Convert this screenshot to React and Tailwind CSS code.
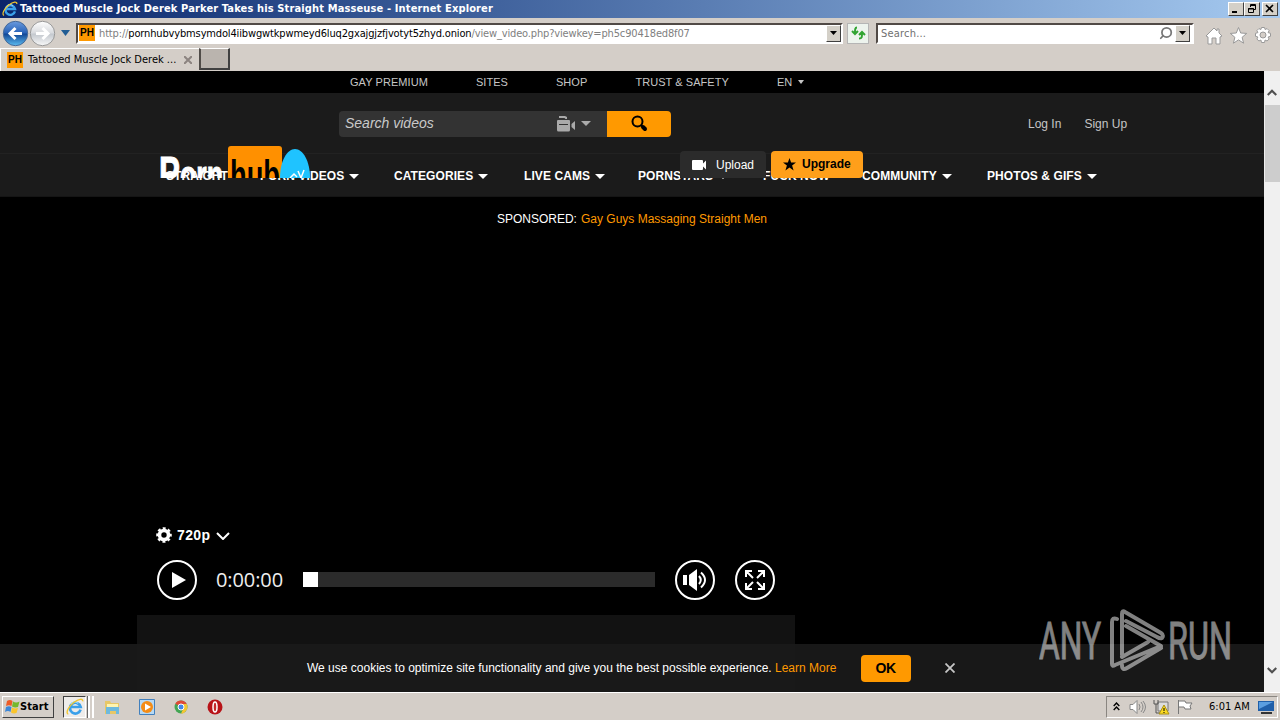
import React from 'react';
import { Search } from 'lucide-react';

const topLinks = ['GAY PREMIUM', 'SITES', 'SHOP', 'TRUST & SAFETY'];

const menu = [
  { label: 'STRAIGHT', width: 'w-[94px]' },
  { label: 'PORN VIDEOS', width: 'w-[134px]', arrow: true },
  { label: 'CATEGORIES', width: 'w-[130px]', arrow: true },
  { label: 'LIVE CAMS', width: 'w-[114px]', arrow: true },
  { label: 'PORNSTARS', width: 'w-[125px]', arrow: true },
  { label: 'FUCK NOW', width: 'w-[99px]' },
  { label: 'COMMUNITY', width: 'w-[125px]', arrow: true },
  { label: 'PHOTOS & GIFS', width: 'w-[120px]', arrow: true },
];

const Caret = ({ className }) => (
  <svg className={className} viewBox="0 0 10 5" fill="currentColor" preserveAspectRatio="none">
    <path d="M0 0h10L5 5z" />
  </svg>
);

const IeIcon = ({ size }) => (
  <svg width={size} height={size} viewBox="0 0 20 20" fill="none" className="shrink-0">
    <path d="M16.2 13A6 6 0 1 1 16.3 10H5" stroke="#3aa0ea" strokeWidth="3" />
    <path d="M5.5 7a5 5 0 0 1 8-1" stroke="#a5e4ff" strokeWidth="1.2" />
    <path d="M2.6 18C-1 17 3 9 8.5 5S19 0 18.6 3.8" stroke="#f2c62f" strokeWidth="1.5" />
  </svg>
);

const Favicon = () => (
  <span className="flex h-4 w-4 shrink-0 items-center justify-center bg-[#ff9900] font-['Liberation_Sans'] text-[10px] font-bold leading-none text-black">
    PH
  </span>
);

const DropButton = () => (
  <span className="flex h-[17px] w-[15px] items-center justify-center border border-t-white border-l-white border-r-[#404040] border-b-[#404040] bg-[#d4d0c8]">
    <Caret className="h-1 w-[7px] text-black" />
  </span>
);

const WindowButton = ({ children, className = '' }) => (
  <span className={`flex h-[14px] w-4 items-center justify-center border border-t-white border-l-white border-r-[#404040] border-b-[#404040] bg-[#d4d0c8] ${className}`}>
    <svg width="10" height="10" viewBox="0 0 10 10" fill="none" stroke="#000">
      {children}
    </svg>
  </span>
);

const NavCircle = ({ back }) => (
  <svg width="27" height="27" viewBox="0 0 27 27" className="shrink-0">
    <defs>
      <linearGradient id={back ? 'nav-back' : 'nav-next'} x2="0" y2="1">
        <stop stopColor={back ? '#6a9ade' : '#ffffff'} />
        <stop offset=".48" stopColor={back ? '#2862b7' : '#d8dade'} />
        <stop offset=".52" stopColor={back ? '#124795' : '#c3c8ce'} />
        <stop offset="1" stopColor={back ? '#5cbcf1' : '#f8f8f8'} />
      </linearGradient>
    </defs>
    <circle cx="13.5" cy="13.5" r="12.2" fill={back ? 'url(#nav-back)' : 'url(#nav-next)'} stroke={back ? '#466998' : '#989898'} />
    <path
      d={back ? 'M20 13.5H8m5.5-5.5L8 13.5l5.5 5.5' : 'M7 13.5h12M13.5 8l5.5 5.5-5.5 5.5'}
      fill="none"
      stroke="#fff"
      strokeWidth="3"
    />
  </svg>
);

const Browser = () => (
  <div className="font-['DejaVu_Sans_Condensed','DejaVu_Sans',sans-serif] text-[11px] text-black">
    {/* title bar */}
    <div className="flex h-[18px] items-center bg-linear-to-r from-[#0a246a] to-[#a6caf0] pr-0.5 pl-0.5">
      <IeIcon size={16} />
      <span className="ml-0.5 pt-px text-[11px] font-bold whitespace-nowrap text-white tracking-[0.135px]">
        Tattooed Muscle Jock Derek Parker Takes his Straight Masseuse - Internet Explorer
      </span>
      <div className="ml-auto flex">
        <WindowButton><path d="M1 8h5" strokeWidth="2" /></WindowButton>
        <WindowButton><path d="M3.5 3V.5h5v5H6M3 1.5h6M1.5 4.5h5v4h-5zM1 5h6" /></WindowButton>
        <WindowButton className="ml-0.5"><path d="M1 1l7 7M8 1L1 8" strokeWidth="1.6" /></WindowButton>
      </div>
    </div>

    {/* address bar */}
    <div className="flex h-[30px] items-center bg-[#d4cec8] pl-[2px]">
      <NavCircle back />
      <NavCircle />
      <Caret className="mx-[5px] h-[6px] w-[9px] text-[#215d94]" />
      <div className="ml-px flex h-[21px] w-[767px] items-center border-2 border-t-[#514a46] border-l-[#514a46] border-r-white border-b-white bg-white pl-px">
        <Favicon />
        <span className="ml-1 pt-0.5 whitespace-nowrap text-[#808080] tracking-[-0.148px]">
          http://<span className="text-black">pornhubvybmsymdol4iibwgwtkpwmeyd6luq2gxajgjzfjvotyt5zhyd.onion</span>/view_video.php?viewkey=ph5c90418ed8f07
        </span>
        <span className="ml-auto"><DropButton /></span>
      </div>
      <span className="ml-1 flex h-[21px] w-[22px] items-center justify-center border border-[#b5b5b5] bg-[#edf3ed]">
        <svg width="15" height="14" viewBox="0 0 15 14" fill="none" stroke="#31a431" strokeWidth="2">
          <path d="M6 1.500C4 1.500 4 3 4 8M1 5l3 3 3-3M8 12.500c3 0 3-1 3-6M8 9l3-3 3 3" />
        </svg>
      </span>
      <div className="ml-[7px] flex h-[21px] w-[318px] items-center border-2 border-t-[#514a46] border-l-[#514a46] border-r-white border-b-white bg-white pl-[3px]">
        <span className="pt-0.5 text-[#707070] tracking-[0.2px]">Search...</span>
        <Search className="mr-0.5 ml-auto h-[14px] w-[14px] -scale-x-100 text-[#777]" strokeWidth={3} />
        <span className="mr-0.5"><DropButton /></span>
      </div>
      <svg width="70" height="20" viewBox="0 0 70 20" className="mt-[5px] ml-[11px]" fill="#fff" stroke="#999">
        <path d="M1 10L9 2l3 3V3h2v4l3 3-2 1v7h-4v-6H7v6H3v-7z" />
        <path d="M33.500 1.500l2.200 5.500 6 .4-4.600 3.900 1.500 5.900-5.100-3.300-5.100 3.300 1.500-5.900-4.600-3.900 6-.4z" />
        <g>
          <path d="M56.500 1.500h3l.6 2 2-.9 2 2-1 2 2.400.7v3l-2.400.7 1 2-2 2-2-1-.6 2.500h-3l-.6-2.500-2 1-2-2 1-2-2.400-.7v-3l2.400-.7-1-2 2-2 2 .9z" />
          <circle cx="58" cy="9" r="3" fill="#d4cec8" />
        </g>
      </svg>
    </div>

    {/* tabs */}
    <div className="flex h-[23px] bg-[#d4cec8]">
      <div className="flex w-[199px] items-center border-t border-l border-white pl-[6px]">
        <Favicon />
        <span className="ml-[5px] w-[150px] pt-px whitespace-nowrap">Tattooed Muscle Jock Derek ...</span>
        <svg width="8" height="8" viewBox="0 0 8 8" className="ml-[6px]" stroke="#8c8480" strokeWidth="2">
          <path d="M0 0l8 8M8 0L0 8" />
        </svg>
      </div>
      <span className="h-[22px] w-[31px] border-t border-r-2 border-b-2 border-l-2 border-t-white border-r-[#404040] border-b-[#404040] border-l-[#504c48] bg-[#bab4ae]" />
    </div>
  </div>
);

const Header = () => (
  <header className="relative">
    <div className="flex h-[22px] items-center gap-[48px] bg-black pl-[350px] text-[11px] tracking-[0.06px] text-[#c6c6c6]">
      {topLinks.map((link) => (
        <span key={link}>{link}</span>
      ))}
      <span className="flex items-center gap-[6px]">EN <Caret className="h-1 w-[6px]" /></span>
    </div>

    <div className="flex h-[61px] items-center border-b border-[#222] bg-[#1b1b1b] pt-px pl-[339px] text-[12px]">
      <div className="flex h-[26px] w-[268px] items-center rounded-l-sm bg-[#333] pl-[6px] text-[#cacaca]">
        <span className="text-[14px] italic">Search videos</span>
        <svg width="20" height="16" viewBox="0 0 20 16" className="ml-auto text-[#aaa]" fill="currentColor">
          <path d="M3 0h6l2 1v2H9.500L8.500 2H3zM2 4h11q1 0 1 1v9q0 1.500-1.500 1.500h-10Q1 15.500 1 14V5q0-1 1-1zM15.500 8L19 5v9l-3.500-3z" />
          <path d="M3 8.500h9" stroke="#333" />
        </svg>
        <Caret className="mr-4 ml-[5px] h-[5px] w-[10px] text-[#aaa]" />
      </div>
      <div className="flex h-[26px] w-16 items-center justify-center rounded-r-sm bg-[#ff9900] text-black">
        <svg width="17" height="17" viewBox="0 0 17 17" fill="none" stroke="currentColor">
          <circle cx="6.500" cy="6.500" r="5" strokeWidth="2" />
          <path d="M10 10l2 2" strokeWidth="2" />
          <path d="M12 12l2 2" strokeWidth="4" strokeLinecap="round" />
        </svg>
      </div>
      <span className="ml-[357px] text-[#c6c6c6]">Log In</span>
      <span className="ml-[23px] text-[#c6c6c6]">Sign Up</span>
    </div>

    <nav className="flex h-[43px] items-center border-b border-[#151515] bg-[#1b1b1b] pt-0.5 pl-[166px] text-[12px] font-bold text-white">
      {menu.map((item) => (
        <span key={item.label} className={`flex shrink-0 items-center gap-[5px] whitespace-nowrap tracking-[0.08px] ${item.width}`}>
          {item.label}
          {item.arrow && <Caret className="mt-px h-[5px] w-[10px]" />}
        </span>
      ))}
    </nav>

    {/* logo, cut off by its container */}
    <svg className="absolute top-[75px] left-[160px]" width="151" height="32" viewBox="0 0 151 32">
      <g fill="#fff" stroke="#fff" fontFamily="Liberation Sans" fontWeight="bold">
        <text x="-1" y="43" fontSize="47" textLength="64" lengthAdjust="spacingAndGlyphs">
          P<tspan fontSize="40">orn</tspan>
        </text>
      </g>
      <rect x="68" width="54" height="38" rx="3" fill="#ff9000" />
      <text x="70" y="44" fill="#000" fontFamily="Liberation Sans" fontWeight="bold" fontSize="42" textLength="50" lengthAdjust="spacingAndGlyphs">hub</text>
      <path d="M120 32C120 15 127 3 135 3s15 12 15 29z" fill="#1fc3ff" />
      <path d="M130 32l4-4 3 3M138 25l3 7 3-8" stroke="#fff" strokeWidth="1.500" fill="none" />
    </svg>

    <div className="absolute top-[80px] left-[680px] flex h-[27px] gap-[5px] text-[12px]">
      <div className="flex w-[86px] items-center rounded-t bg-[#2b2b2b] pl-3 text-white">
        <svg width="15" height="10" viewBox="0 0 15 10" fill="currentColor">
          <path d="M0 1Q0 0 1 0h9q1 0 1 1v2.500L14 .5v9l-3-3V9q0 1-1 1H1Q0 10 0 9z" />
        </svg>
        <span className="ml-[9px]">Upload</span>
      </div>
      <div className="flex w-[92px] items-center rounded bg-[#ff9f1a] pb-px pl-3 font-bold text-black">
        <svg width="13" height="13" viewBox="0 0 13 13">
          <path d="M6.500 0l1.600 4.500H13L9.100 7.400l1.500 5.200-4.100-3.100-4.100 3.100 1.500-5.200L0 4.500h4.900z" />
        </svg>
        <span className="ml-[6px]">Upgrade</span>
      </div>
    </div>
  </header>
);

const Player = () => (
  <div className="mt-[296px] text-white">
    <div className="flex h-[20px] items-center pl-[156px] text-[14px] font-bold">
      <svg width="16" height="16" viewBox="0 0 16 16" fill="none" stroke="currentColor">
        <circle cx="8" cy="8" r="4.500" strokeWidth="3.600" />
        <circle cx="8" cy="8" r="6.600" strokeWidth="2.400" strokeDasharray="2.900 2.284" strokeDashoffset="1.450" />
      </svg>
      <span className="ml-[5px] tracking-[0.4px]">720p</span>
      <svg width="14" height="8" viewBox="0 0 14 8" className="mt-px ml-[5px]" fill="none" stroke="currentColor" strokeWidth="2">
        <path d="M1 1l6 6 6-6" />
      </svg>
    </div>
    <div className="mt-[15px] flex h-10 items-center pl-[157px]">
      <svg width="40" height="40" viewBox="0 0 40 40" fill="none" stroke="currentColor">
        <circle cx="20" cy="20" r="19" strokeWidth="2" />
        <path d="M15 12l14 8-14 8z" fill="currentColor" stroke="none" />
      </svg>
      <span className="ml-[19px] w-[87px] font-['Open_Sans','Noto_Sans',sans-serif] text-[20px] tracking-[-0.1px] text-[#eee]">0:00:00</span>
      <div className="-mt-px h-[15px] w-[352px] bg-[#2b2b2b]">
        <div className="h-full w-[15px] bg-white" />
      </div>
      <svg width="40" height="40" viewBox="0 0 40 40" className="ml-5" fill="none" stroke="currentColor">
        <circle cx="20" cy="20" r="19" strokeWidth="2" />
        <path d="M8 15h4v10H8zM14 15l8-6v22l-8-6z" fill="currentColor" stroke="none" />
        <path d="M24 16q3.500 4 0 8M26 12.500q8 7.500 0 15" strokeWidth="2" />
      </svg>
      <svg width="40" height="40" viewBox="0 0 40 40" className="ml-5" fill="none" stroke="currentColor" strokeWidth="2">
        <circle cx="20" cy="20" r="19" />
        <path d="M11 17v-6h6M11 11l7 7M23 11h6v6M29 11l-7 7M11 23v6h6M11 29l7-7M23 29h6v-6M29 29l-7-7" />
      </svg>
    </div>
    <div className="mt-[15px] ml-[137px] h-[77px] w-[658px] bg-[#121212]" />
  </div>
);

const CookieBar = () => (
  <div className="absolute bottom-0 left-0 flex h-12 w-full items-center bg-[#1b1b1b]/90 pl-[307px] text-[12px] text-white">
    <span className="w-[468px] whitespace-nowrap">
      We use cookies to optimize site functionality and give you the best possible experience.
    </span>
    <span className="w-[86px] text-[#ff9900]">Learn More</span>
    <span className="flex h-[27px] w-[50px] items-center justify-center rounded bg-[#ff9900] text-[14px] font-bold text-black">
      <span className="-ml-px tracking-[-0.5px]">OK</span>
    </span>
    <svg width="10" height="10" viewBox="0 0 10 10" className="ml-[34px]" stroke="#c6c6c6" strokeWidth="1.800">
      <path d="M.5.5l9 9M9.500.5l-9 9" />
    </svg>
  </div>
);

const Watermark = () => (
  <svg className="absolute right-[29px] bottom-[20px]" width="196" height="64" viewBox="0 0 196 64" fill="#fff" opacity=".5">
    <g fontFamily="Roboto" fontSize="52" stroke="#fff" strokeWidth=".9">
      <text x="0" y="51" textLength="62" lengthAdjust="spacingAndGlyphs">ANY</text>
      <text x="129" y="51" textLength="64" lengthAdjust="spacingAndGlyphs">RUN</text>
    </g>
    <path
      d="M78 11q-5-2-5 3v42q0 3 3 1L122 38 87 18M83 47V6q0-4 3-2l36 21q3 2 1 5-2 1-5-1L87 13M109 34L83 49M83 57q0 6 5 3l34-20"
      fill="none"
      stroke="#fff"
      strokeWidth="4"
      strokeLinejoin="round"
      strokeLinecap="round"
    />
  </svg>
);

const Scrollbar = () => (
  <div className="flex w-4 flex-col items-center bg-[#f0f0f0] pt-[18px] pb-[18px]">
    <svg width="10" height="7" viewBox="0 0 10 7" fill="none" stroke="#505050" strokeWidth="2.200"><path d="M.7 6L5 1.700 9.300 6" /></svg>
    <div className="mt-[9px] h-[77px] w-[15px] bg-[#cdcdcd]" />
    <svg width="10" height="7" viewBox="0 0 10 7" className="mt-auto" fill="none" stroke="#505050" strokeWidth="2.200"><path d="M.7 1L5 5.300 9.300 1" /></svg>
  </div>
);

const Taskbar = () => (
  <div className="flex h-7 items-center border-t border-white bg-[#d4cec8] pl-0.5 font-['DejaVu_Sans_Condensed','DejaVu_Sans',sans-serif] text-[11px] text-black">
    <div className="flex h-[22px] w-[52px] items-center border border-t-white border-l-white border-r-[#404040] border-b-[#404040] pl-0.5">
      <svg width="15" height="15" viewBox="0 0 15 15">
        <path d="M2 2q3-2 5.500 0L6.500 7Q4 5.500 1 7z" fill="#ed5b27" />
        <path d="M8 2.500q3 2 6.500 0L13 8q-3 1-6-.5z" fill="#75b82d" />
        <path d="M1 8q3-1.500 5.500 0L5.500 13Q3 11 0 13z" fill="#3b87d8" />
        <path d="M7 8.500q3 1.500 6 .5l-1.500 5q-3 1-5.500-.5z" fill="#fac52c" />
      </svg>
      <span className="pt-0.5 font-bold tracking-[0.1px]">Start</span>
    </div>
    <div className="ml-[9px] flex h-[22px] w-[23px] items-center justify-center border border-t-[#404040] border-l-[#404040] border-r-white border-b-white bg-[#eeecea]">
      <IeIcon size={18} />
    </div>
    <span className="ml-px h-[22px] w-[3px] border-r border-l border-l-[#666] border-r-white bg-white" />
    <span className="ml-0.5 h-[22px] w-0.5 bg-white" />
    <div className="ml-[10px] flex items-center gap-[18px]">
      <svg width="17" height="16" viewBox="0 0 17 16">
        <path d="M1 2h5l1 2h8v11H1z" fill="#e7c767" />
        <path d="M3 5h11v4H3z" fill="#fff4b0" />
        <path d="M2 8h13v7h-3v-3H6v3H2z" fill="#6db9de" />
      </svg>
      <svg width="16" height="16" viewBox="0 0 16 16">
        <path d="M.5.5h15v15H.5z" fill="#b6d9f4" stroke="#4280bd" />
        <circle cx="8" cy="8" r="6" fill="#f48c16" />
        <path d="M6 4.500l6 3.500-6 3.500z" fill="#fff" />
      </svg>
      <svg width="16" height="16" viewBox="0 0 16 16">
        <circle cx="8" cy="8" r="6.500" fill="#43a553" />
        <path d="M8 8L2.300 4.700A6.500 6.500 0 0 1 13.700 5z" fill="#df4937" />
        <path d="M8 5h5.700A6.500 6.500 0 0 1 8 14.500L11 8z" fill="#f4c633" />
        <circle cx="8" cy="8" r="3" fill="#4387e8" stroke="#fff" />
      </svg>
      <svg width="16" height="16" viewBox="0 0 16 16">
        <circle cx="8" cy="8" r="7.500" fill="#b81318" />
        <ellipse cx="8" cy="8" rx="2" ry="5" fill="#c62a2a" stroke="#fff" strokeWidth="1.500" />
      </svg>
    </div>
    <div className="mr-0.5 ml-auto flex h-[22px] w-[172px] items-center border border-t-[#8a8681] border-l-[#8a8681] border-r-white border-b-white pl-[6px]">
      <svg width="7" height="9" viewBox="0 0 7 9" fill="none" stroke="#000" strokeWidth="1.400"><path d="M.7 4l2.800-3 2.800 3M.7 8l2.800-3 2.800 3" /></svg>
      <svg width="17" height="16" viewBox="0 0 17 16" className="ml-[9px]" fill="none" stroke="#888">
        <path d="M1 5.500h3l4-4v13l-4-4H1z" fill="#fff" />
        <path d="M10 5q2 3 0 6M12 3q4 5 0 10M14 2q5 6 0 12" />
      </svg>
      <svg width="17" height="16" viewBox="0 0 17 16" className="ml-[7px]">
        <path d="M5 3h10v9H5z" fill="#ddd" stroke="#777" />
        <path d="M1 1v4h4V1M3 5v9h4" fill="none" stroke="#555" />
        <path d="M11 6l5 9H6z" fill="#fbda20" stroke="#aa9013" />
        <path d="M11 9v3M11 13v1" stroke="#000" />
      </svg>
      <svg width="17" height="16" viewBox="0 0 17 16" className="ml-[7px]" fill="#fff" stroke="#777">
        <path d="M1.500 15V1M2 2h6l1 2h6l-2 3 1 3H8L7 8H2" />
      </svg>
      <span className="ml-[15px] pt-0.5 whitespace-nowrap">6:01 AM</span>
      <svg width="16" height="14" viewBox="0 0 16 14" className="mr-[3px] ml-auto">
        <path d="M0 1h16v10H0z" fill="#205fa9" />
        <path d="M1 2h14L1 9z" fill="#5b9ee0" />
        <path d="M3 12h11v2H3z" fill="#333" />
      </svg>
    </div>
  </div>
);

const App = () => {
  return (
    <div className="flex h-[720px] w-[1280px] flex-col overflow-hidden bg-[#d4cec8]">
      <Browser />
      <div className="flex h-[621px] shrink-0">
        <main className="relative w-[1264px] overflow-hidden bg-black font-['Liberation_Sans',Arial,sans-serif]">
          <Header />
          <div className="mt-[12px] flex h-5 items-center justify-center gap-1 text-[12px]">
            <span className="text-white">SPONSORED:</span>
            <span className="text-[#ff9900]">Gay Guys Massaging Straight Men</span>
          </div>
          <Player />
          <CookieBar />
          <Watermark />
        </main>
        <Scrollbar />
      </div>
      <Taskbar />
    </div>
  );
};

export default App;
